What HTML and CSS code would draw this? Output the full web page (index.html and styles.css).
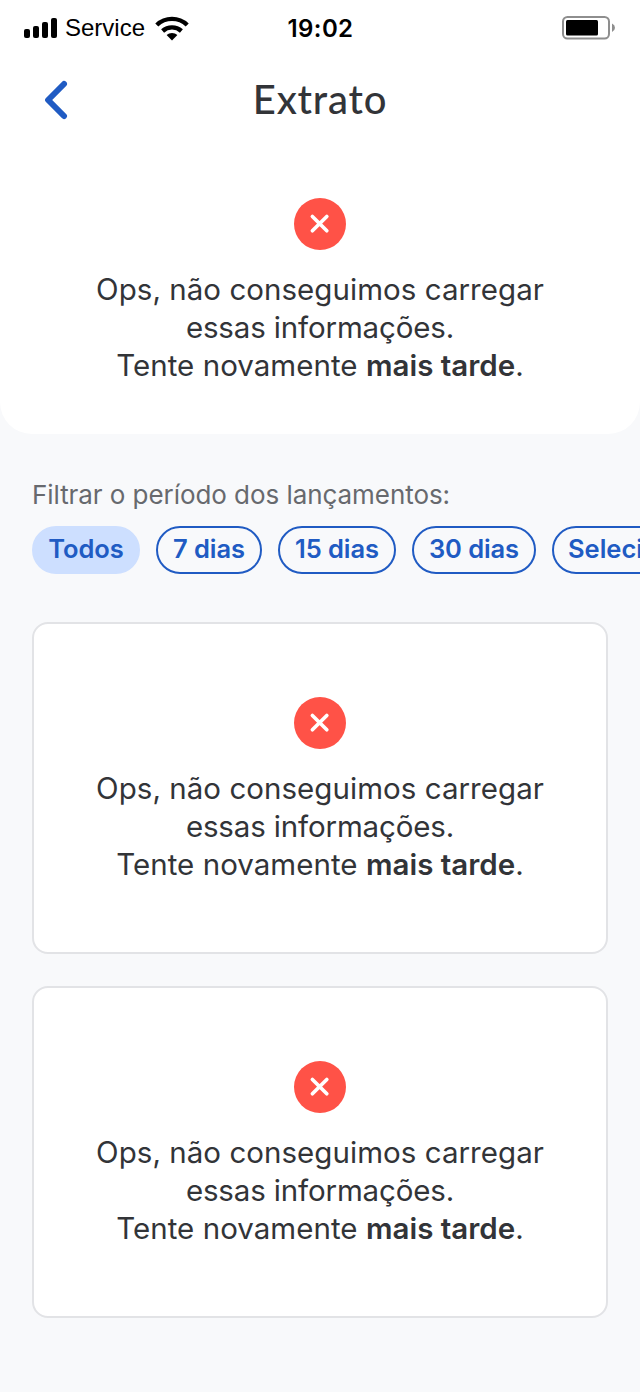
FILE: index.html
```html
<!DOCTYPE html>
<html lang="pt-BR">
<head>
<meta charset="utf-8">
<title>Extrato</title>
<link rel="stylesheet" href="styles.css">
</head>
<body>
<svg class="defs" aria-hidden="true">
  <symbol id="error" viewBox="0 0 52 52">
    <circle cx="26" cy="26" r="26" fill="#ff5247"/>
    <path d="M18.4 18.5 32.8 32.7M32.8 18.5 18.4 32.7" fill="none" stroke="#fff" stroke-width="3.7" stroke-linecap="round"/>
  </symbol>
</svg>
<header class="top">
  <div class="status">
    <div class="status-left">
      <svg class="signal" width="34" height="20" viewBox="0 0 34 20"><rect y="11" width="6" height="9" rx="2"/><rect x="9" y="8" width="6" height="12" rx="2"/><rect x="18" y="4" width="6" height="16" rx="2"/><rect x="27" y="0" width="6" height="20" rx="2"/></svg>
      <span class="carrier">Service</span>
      <svg class="wifi" width="34" height="25" viewBox="0 0 34 25"><g fill="none" stroke="#000" stroke-width="4.4"><path d="M1.8 9A22 22 0 0 1 32.2 9"/><path d="M7.6 15A14 14 0 0 1 26.4 15"/></g><path d="M17 24.4 11.6 19a8 8 0 0 1 10.8 0z"/></svg>
    </div>
    <span class="clock">19:02</span>
    <svg class="battery" width="54" height="24" viewBox="0 0 54 24"><rect x="1" y="1" width="46" height="21.5" rx="4.5" fill="none" stroke="#8e8e8e" stroke-width="2"/><rect x="4" y="4" width="32" height="15.5" rx="1.5"/><path d="M50 7.5q3 1.5 3 4.3t-3 4.3z" fill="#8e8e8e"/></svg>
  </div>
  <div class="nav">
    <svg class="back" width="24" height="40" viewBox="0 0 24 40"><path d="M20 4 4.1 20 20 36" fill="none" stroke="#205bc3" stroke-width="6" stroke-linecap="round" stroke-linejoin="round"/></svg>
    <h1 class="title">Extrato</h1>
  </div>
  <div class="error">
    <svg class="error-icon"><use href="#error"/></svg>
    <p class="error-text">Ops, não conseguimos carregar<br><span class="error-line">essas informações.</span><br>Tente novamente <b>mais tarde</b>.</p>
  </div>
</header>
<main class="content">
  <p class="filter-label">Filtrar o período dos lançamentos:</p>
  <div class="chips">
    <span class="chip chip-active">Todos</span>
    <span class="chip chip-7">7 dias</span>
    <span class="chip chip-15">15 dias</span>
    <span class="chip chip-30">30 dias</span>
    <span class="chip chip-select">Selecionar</span>
  </div>
  <section class="card error">
    <svg class="error-icon"><use href="#error"/></svg>
    <p class="error-text">Ops, não conseguimos carregar<br><span class="error-line">essas informações.</span><br>Tente novamente <b>mais tarde</b>.</p>
  </section>
  <section class="card error">
    <svg class="error-icon"><use href="#error"/></svg>
    <p class="error-text">Ops, não conseguimos carregar<br><span class="error-line">essas informações.</span><br>Tente novamente <b>mais tarde</b>.</p>
  </section>
</main>
</body>
</html>
```
FILE: styles.css
```css
* { box-sizing: border-box; margin: 0; padding: 0; }
body { width: 640px; height: 1392px; overflow: hidden; background: #f8f9fb; font-family: Inter, "Liberation Sans", sans-serif; color: #323438; }
svg { display: block; flex: none; }
.defs { display: none; }
.top { height: 434px; background: #fff; border-radius: 0 0 32px 32px; }
.status { height: 56px; padding: 0 24px; display: grid; grid-template-columns: 1fr auto 1fr; align-items: center; }
.status-left { display: flex; align-items: center; }
.carrier { margin-left: 7px; font: 24px/30px "Liberation Sans", sans-serif; color: #000; width: 82px; }
.wifi { margin-left: 8px; }
.clock { padding: 2px 0 0 1px; font-size: 24px; line-height: 30px; font-weight: 600; letter-spacing: .4px; color: #000; }
.battery { justify-self: end; }
.nav { height: 88px; padding-left: 44px; display: grid; grid-template-columns: 24px 1fr 68px; align-items: center; }
.title { padding-bottom: 2px; text-align: center; font: 500 40px/48px Lato, sans-serif; letter-spacing: .8px; color: #323438; }
.error { display: flex; flex-direction: column; align-items: center; }
.top .error { padding-top: 54px; }
.error-icon { width: 52px; height: 52px; }
.error-text { margin-top: 20px; text-align: center; white-space: nowrap; font-size: 29.5px; line-height: 38px; font-weight: 400; letter-spacing: .04px; }
.error-line { letter-spacing: -.15px; }
.error-text b { font-weight: 600; letter-spacing: 0; }
.content { padding: 0 32px; }
.filter-label { padding-top: 45px; font-size: 26px; line-height: 32px; font-weight: 400; letter-spacing: -.06px; color: #67696e; white-space: nowrap; }
.chips { margin-top: 15px; width: 608px; overflow: hidden; display: flex; gap: 16px; }
.chip { flex: none; height: 48px; border: 2px solid #205bc3; border-radius: 24px; text-align: center; font-size: 25.5px; line-height: 42px; font-weight: 600; letter-spacing: -.1px; color: #205bc3; }
.chip-active { width: 108px; background: #cddfff; border-color: #cddfff; }
.chip-7 { width: 106px; }
.chip-15 { width: 118px; }
.chip-30 { width: 124px; }
.chip-select { width: 168px; padding-left: 14px; text-align: left; letter-spacing: 0; }
.card { margin-top: 48px; height: 332px; padding-top: 73px; background: #fff; border: 2px solid #e2e3e6; border-radius: 16px; }
.card + .card { margin-top: 32px; }
```
